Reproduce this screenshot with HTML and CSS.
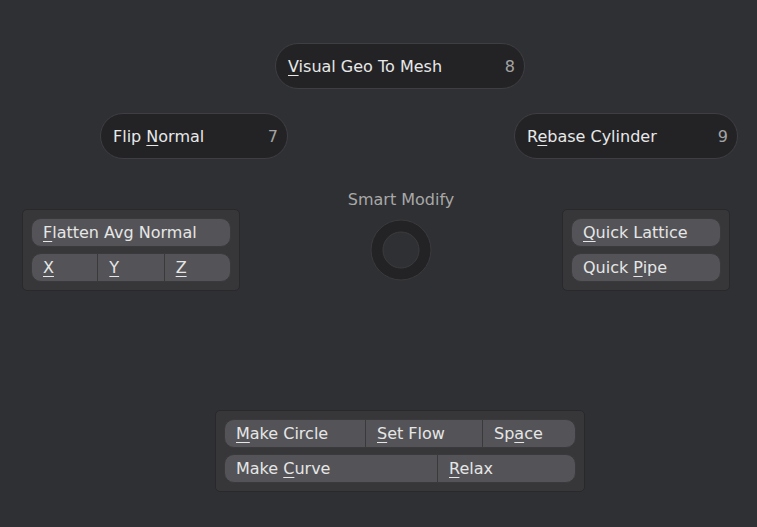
FILE: index.html
```html
<!DOCTYPE html>
<html>
<head>
<meta charset="utf-8">
<link rel="stylesheet" href="styles.css">
</head>
<body>
<div class="pie">
  <div class="row row-top">
    <div class="pie-btn btn-top"><span class="label"><u>V</u>isual Geo To Mesh</span><span class="key">8</span></div>
  </div>
  <div class="row row-mid">
    <div class="pie-btn btn-left"><span class="label">Flip <u>N</u>ormal</span><span class="key">7</span></div>
    <div class="pie-btn btn-right"><span class="label">R<u>e</u>base Cylinder</span><span class="key">9</span></div>
  </div>
  <div class="row row-center">
    <div class="panel panel-left">
      <div class="brow"><div class="b"><span><u>F</u>latten Avg Normal</span></div></div>
      <div class="brow"><div class="b"><span><u>X</u></span></div><div class="b"><span><u>Y</u></span></div><div class="b"><span><u>Z</u></span></div></div>
    </div>
    <div class="center">
      <div class="title">Smart Modify</div>
      <svg class="ring" width="62" height="62" viewBox="0 0 62 62">
        <circle cx="31" cy="31" r="24" fill="none" stroke="#232326" stroke-width="12"/>
        <circle cx="31" cy="31" r="30" fill="none" stroke="#3b3b3e" stroke-width="1"/>
        <circle cx="31" cy="31" r="18" fill="none" stroke="#3b3b3e" stroke-width="1"/>
      </svg>
    </div>
    <div class="panel panel-right">
      <div class="brow"><div class="b"><span><u>Q</u>uick Lattice</span></div></div>
      <div class="brow"><div class="b"><span>Quick <u>P</u>ipe</span></div></div>
    </div>
  </div>
  <div class="row row-bottom">
    <div class="panel panel-bottom">
      <div class="brow">
        <div class="b w-circle"><span><u>M</u>ake Circle</span></div>
        <div class="b w-flow"><span><u>S</u>et Flow</span></div>
        <div class="b w-space"><span>Sp<u>a</u>ce</span></div>
      </div>
      <div class="brow">
        <div class="b w-curve"><span>Make <u>C</u>urve</span></div>
        <div class="b w-relax"><span><u>R</u>elax</span></div>
      </div>
    </div>
  </div>
</div>
</body>
</html>
```
FILE: styles.css
```css
* { box-sizing: border-box; }
html, body {
  margin: 0;
  padding: 0;
  background: #2f3033;
  width: 757px;
  height: 527px;
  overflow: hidden;
}
.pie {
  font-family: "DejaVu Sans", "Liberation Sans", sans-serif;
  font-size: 16px;
  color: #e6e6e6;
}
u {
  text-decoration: underline;
  text-decoration-thickness: 1px;
  text-underline-offset: 3px;
}
.row { display: flex; }
.row-top { padding-top: 43px; padding-left: 275px; }
.row-mid { margin-top: 24px; padding-left: 100px; }
.row-center { margin-top: 31px; padding-left: 22px; padding-right: 27px; }
.row-bottom { margin-top: 119px; padding-left: 215px; }

.pie-btn {
  height: 46px;
  border-radius: 23px;
  background: #232326;
  border: 1px solid #3f3f43;
  display: flex;
  align-items: center;
  justify-content: space-between;
  padding: 1px 9px 0 12px;
  color: #e8e8e8;
}
.pie-btn .key { color: #a3a3a3; }
.btn-top { width: 250px; }
.btn-left { width: 188px; }
.btn-right { width: 224px; margin-left: 226px; }

.panel {
  background: #37373a;
  border: 1px solid #29292c;
  border-radius: 5px;
  padding: 8px;
  display: flex;
  flex-direction: column;
  gap: 6px;
}
.panel-left { width: 218px; height: 82px; margin-top: 19px; }
.panel-right { width: 168px; height: 82px; margin-top: 19px; }
.panel-bottom { width: 370px; height: 82px; }

.brow { display: flex; height: 29px; }
.b {
  flex: 1;
  height: 29px;
  background: #545458;
  border: 1px solid #3a3a3d;
  display: flex;
  align-items: center;
  padding-left: 11px;
  color: #e6e6e6;
  white-space: nowrap;
}
.b + .b { margin-left: -1px; }
.b:first-child { border-radius: 10px 0 0 10px; }
.b:last-child { border-radius: 0 10px 10px 0; }
.b:only-child { border-radius: 10px; }

.w-circle { flex: 0 0 142px; }
.w-flow { flex: 0 0 118px; }
.w-space { flex: 1; }
.w-curve { flex: 0 0 214px; }
.w-relax { flex: 1; }

.center {
  flex: 1;
  display: flex;
  flex-direction: column;
  align-items: center;
}
.title {
  height: 20px;
  line-height: 20px;
  color: #a8a8a8;
}
.ring { margin-top: 9px; display: block; }
```
